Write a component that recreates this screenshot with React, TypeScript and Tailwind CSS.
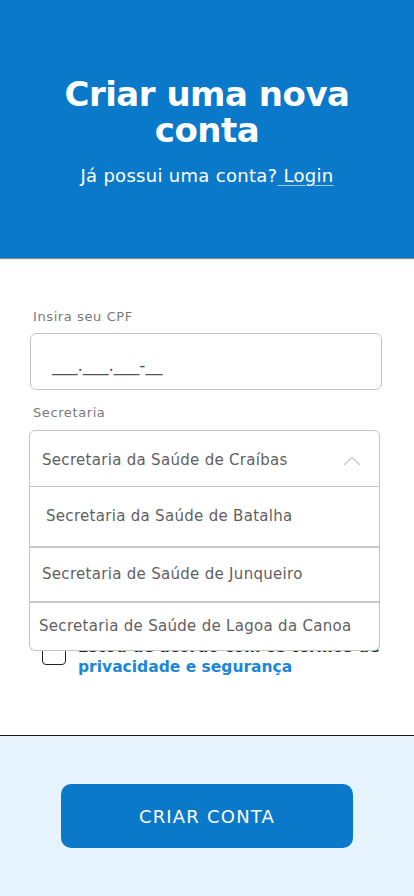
import React from 'react';

const font = { fontFamily: '"DejaVu Sans", "Liberation Sans", sans-serif' };

const options = [
  { label: 'Secretaria da Saúde de Batalha', pad: 'pl-[16px]', h: 'h-[59px]' },
  { label: 'Secretaria de Saúde de Junqueiro', pad: 'pl-[12px]', h: 'h-[55px]' },
  { label: 'Secretaria de Saúde de Lagoa da Canoa', pad: 'pl-[9px]', h: 'h-[49px]' },
];

const ChevronUp: React.FC = () => (
  <svg width="18" height="10" viewBox="0 0 18 10" fill="none">
    <path d="M1 9 L9 1.5 L17 9" stroke="#c8c8c8" strokeWidth="1.2" />
  </svg>
);

const App: React.FC = () => {
  return (
    <div className="w-[414px] h-[896px] bg-white flex flex-col overflow-hidden" style={font}>
      {/* Header */}
      <header className="h-[258px] bg-[#0b79c9] flex flex-col items-center pt-[76px] shadow-[0_1px_1px_rgba(0,0,0,0.45)] relative z-10">
        <h1 className="text-white font-bold text-[34px] leading-[36px] text-center tracking-[-0.5px] w-[300px]">
          Criar uma nova conta
        </h1>
        <p className="mt-4 text-white text-[18px] leading-[24px] tracking-[0.3px]">
          Já possui uma conta?<span className="underline decoration-[#9fc8ea] underline-offset-[3px]"> Login</span>
        </p>
      </header>

      {/* Form */}
      <main className="flex-1 flex flex-col pt-[50px]">
        <label className="ml-[33px] text-[13px] leading-[18px] text-[#7a7a7a] tracking-[0.6px]">Insira seu CPF</label>
        <div className="mt-[7px] ml-[30px] w-[352px] h-[57px] border border-[#c4c4c4] rounded-[6px] flex items-center pl-[21px] pt-[8px]">
          <span className="text-[17px] text-[#555]">___.___.___-__</span>
        </div>

        <label className="mt-[14px] ml-[33px] text-[13px] leading-[18px] text-[#7a7a7a] tracking-[0.6px]">Secretaria</label>

        <div className="relative mt-[8px] ml-[29px] w-[351px] z-20">
          <div className="h-[57px] border border-[#c4c4c4] rounded-t-[6px] flex items-center justify-between pl-[12px] pr-[18px] pt-[4px] bg-white">
            <span className="text-[15px] text-[#5f5f5f] tracking-[0.3px]">Secretaria da Saúde de Craíbas</span>
            <ChevronUp />
          </div>
          <ul className="absolute top-full left-0 w-full bg-white border-x border-b border-[#c4c4c4] rounded-b-[6px]">
            {options.map((o, i) => (
              <li
                key={o.label}
                className={`${o.h} ${o.pad} flex items-center text-[15px] text-[#5f5f5f] tracking-[0.3px] ${i > 0 ? 'border-t-2 border-[#c8c8c8]' : ''}`}
              >
                {o.label}
              </li>
            ))}
          </ul>
        </div>

        <div className="mt-[150px] ml-[42px] flex items-start gap-[12px]">
          <div className="mt-[6px] w-[24px] h-[22px] border border-[#222] rounded-[4px] shrink-0" />
          <p className="text-[15.5px] leading-[20px] font-semibold text-[#222] w-[310px]">
            Estou de acordo com os termos de{' '}
            <span className="text-[#1b87da]">privacidade e segurança</span>
          </p>
        </div>
      </main>

      {/* Footer */}
      <footer className="h-[161px] border-t border-[#1a1a1a] bg-[#e6f3fc] flex items-start justify-center pt-[48px]">
        <button className="w-[292px] h-[64px] rounded-[10px] bg-[#0b79c9] text-white text-[18px] tracking-[1.2px]">
          CRIAR CONTA
        </button>
      </footer>
    </div>
  );
};

export default App;
